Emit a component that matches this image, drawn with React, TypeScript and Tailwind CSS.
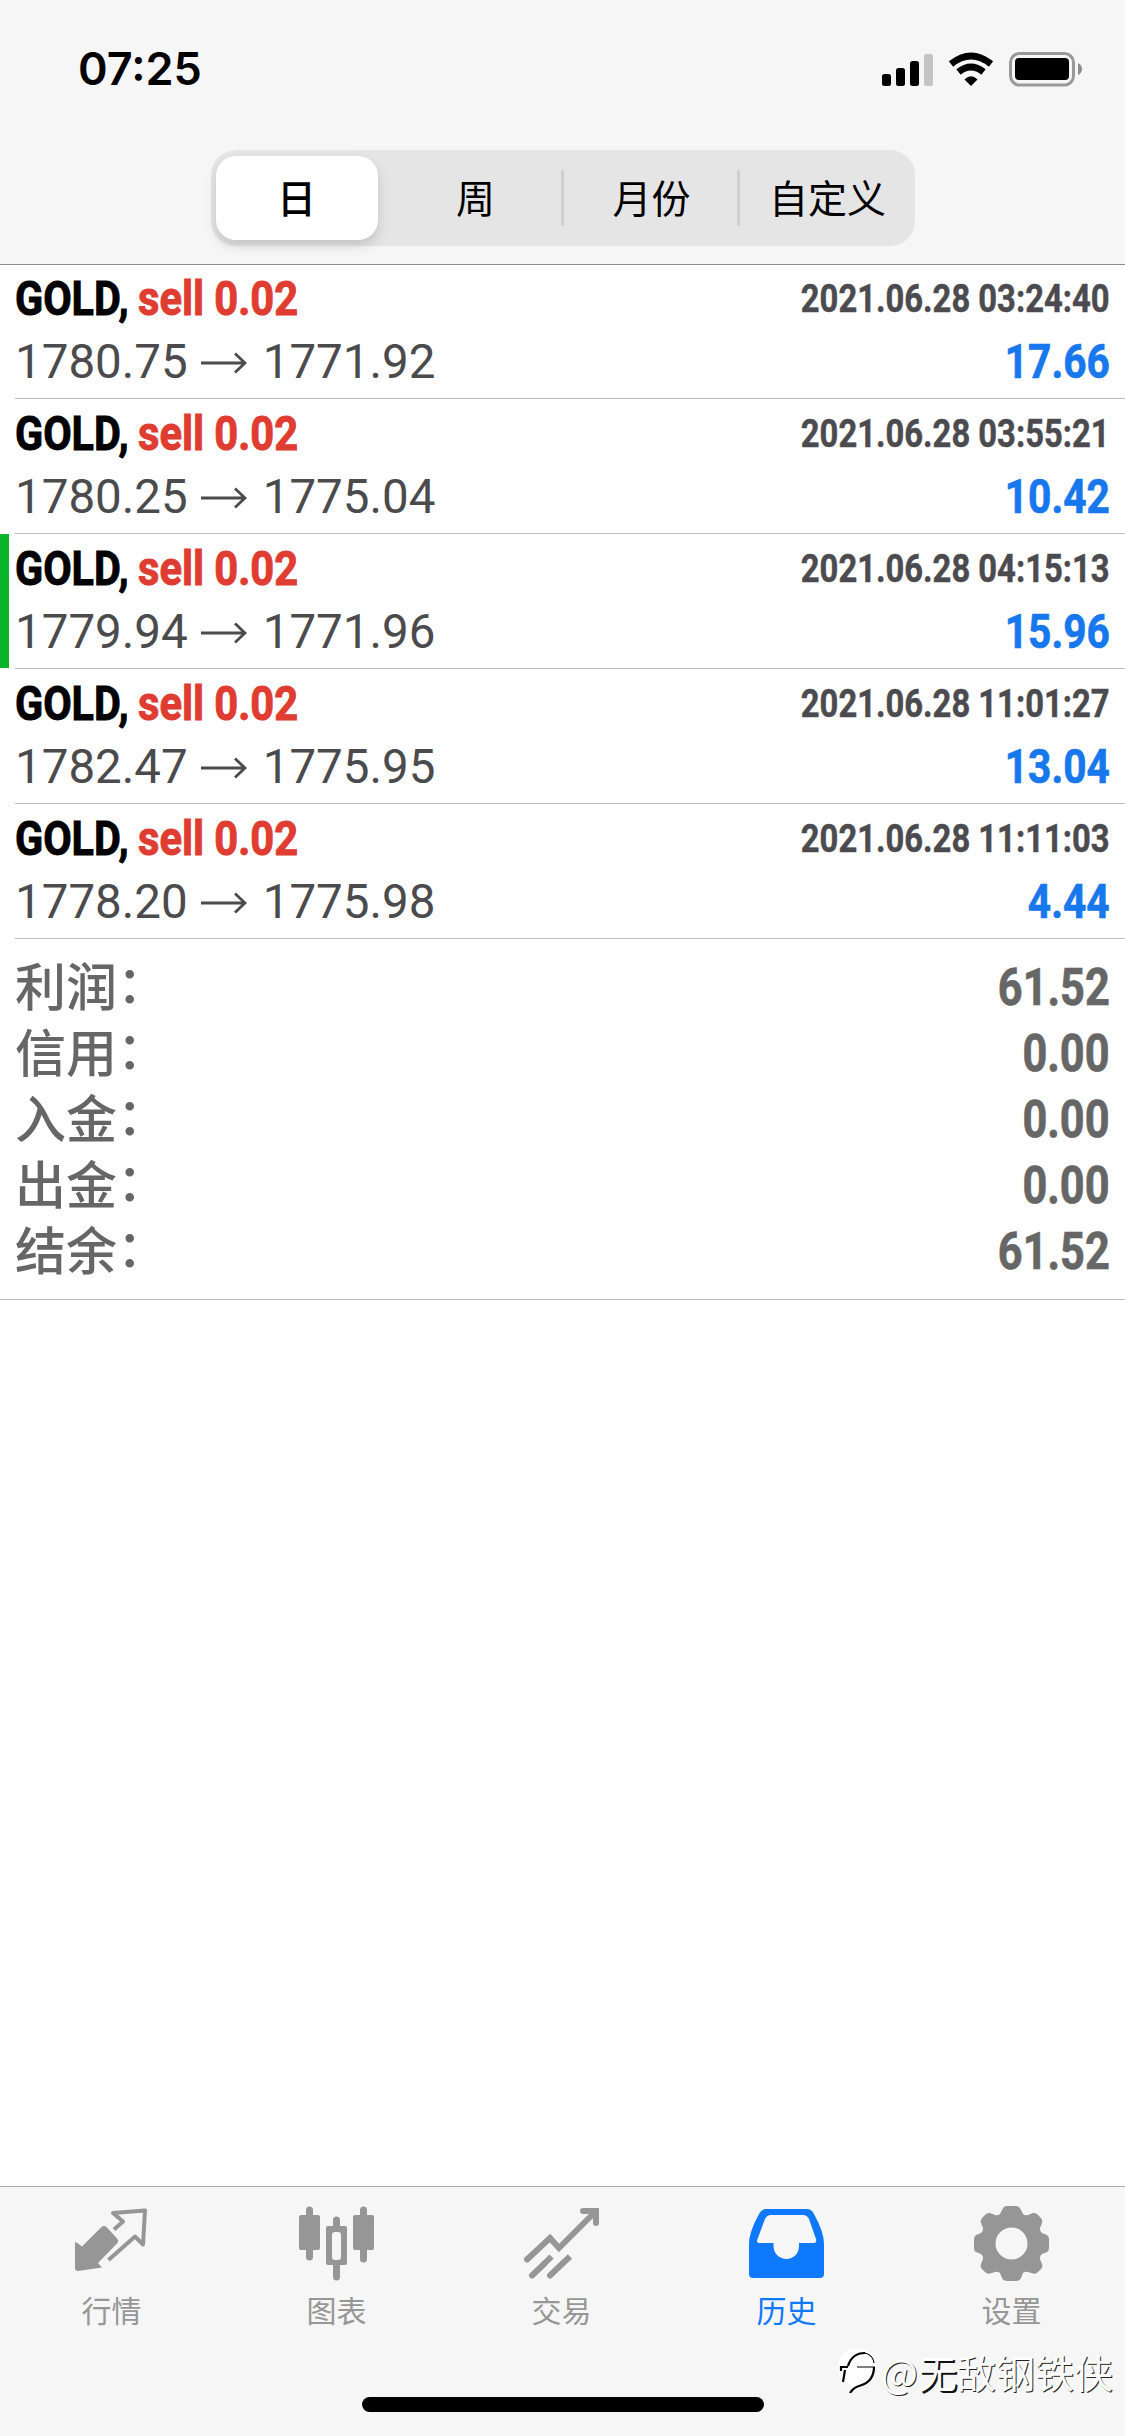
import type { ReactNode } from 'react'

const periods = ['日', '周', '月份', '自定义']

const deals = [
    { open: '1780.75', close: '1771.92', time: '2021.06.28 03:24:40', profit: '17.66' },
    { open: '1780.25', close: '1775.04', time: '2021.06.28 03:55:21', profit: '10.42' },
    { open: '1779.94', close: '1771.96', time: '2021.06.28 04:15:13', profit: '15.96', marked: true },
    { open: '1782.47', close: '1775.95', time: '2021.06.28 11:01:27', profit: '13.04' },
    { open: '1778.20', close: '1775.98', time: '2021.06.28 11:11:03', profit: '4.44' }
]

const totals = [
    { label: '利润', value: '61.52' },
    { label: '信用', value: '0.00' },
    { label: '入金', value: '0.00' },
    { label: '出金', value: '0.00' },
    { label: '结余', value: '61.52' }
]

const tabs: { label: string; icon: ReactNode; active?: boolean }[] = [
    {
        label: '行情',
        icon: (
            <g transform="translate(1 1)">
                <path d="M1.500 34.500Q0 33 0 36V60Q0 63 3 63L27 59.500L23 55L42.500 35Q44 33 42.500 31L31.500 19Q29 17 26.500 19L7 38.500Z" fill="currentColor" />
                <path d="M39 21.500L48 13.500L38 5L70 2.500L68 36.500L60 28.500L33.500 52" fill="none" stroke="currentColor" strokeWidth="4" strokeLinejoin="round" />
            </g>
        )
    },
    {
        label: '图表',
        icon: (
            <>
                <path d="M10.500 3V50M64.500 3V52M37.500 13V22M37.500 58V70" stroke="currentColor" strokeWidth="7" strokeLinecap="round" />
                <rect x="0" y="8" width="21" height="35" rx="2" fill="currentColor" />
                <rect x="54" y="8" width="21" height="35" rx="2" fill="currentColor" />
                <rect x="27" y="19" width="21" height="39" rx="2" fill="currentColor" />
                <rect x="33" y="25" width="9" height="28" rx="3" fill="#f6f6f6" />
            </>
        )
    },
    {
        label: '交易',
        icon: (
            <g fill="none" stroke="currentColor" strokeWidth="6" strokeLinecap="round">
                <path d="M3 52.500L26 31L35 41L70 6" />
                <path d="M59 4H72V16" />
                <path d="M8 68.500L20 57M26 68.500L38 57" />
                <path d="M20 57L27.500 49.500M38 57L46 49.500" strokeLinecap="butt" />
            </g>
        )
    },
    {
        label: '历史',
        active: true,
        icon: (
            <path
                fillRule="evenodd"
                fill="currentColor"
                d="M17 2H58Q62.500 2 65 7Q75 25 75 37V67Q75 71 71 71H4Q0 71 0 67V37Q0 25 10 7Q12.500 2 17 2ZM22 8H54Q58 8 60 12L67 32Q68 36 65 36H50V39C50 47 44 52 37.500 52S24.500 47 24.500 39V36H10Q7 36 8.500 32L16 12Q18 8 22 8Z"
            />
        )
    },
    {
        label: '设置',
        icon: (
            <path
                fillRule="evenodd"
                fill="currentColor"
                d="M33 -1H42Q45 -1 46.500 2L49 7Q51 9 54 8L59 6Q62 5.500 64 8L67 11Q69 13.500 68 16L66 21Q65.500 24 68 26L73 28Q75 29.500 75 32V41Q75 44 73 45L68 47Q65.500 49 66 52L68 57Q69 60 67 62L64 65Q62 67.500 59 66.500L54 65Q51 64 49 66L46.500 72Q45 74 42 74H33Q30 74 28.500 72L26 66Q24 64 21 65L16 66.500Q13 67.500 11 65L8 62Q6 60 7 57L9 52Q9.500 49 7 47L2 45Q0 44 0 41V32Q0 29.500 2 28L7 26Q9.500 24 9 21L7 16Q6 13.500 8 11L11 8Q13 5.500 16 6L21 8Q24 9 26 7L28.500 2Q30 -1 33 -1ZM37.500 20.500A16 16 0 1 0 37.500 52.500A16 16 0 1 0 37.500 20.500Z"
            />
        )
    }
]

function StatusBar() {
    return (
        <div className="flex h-[150px] items-start justify-between pl-[78px] pr-[42px] pt-[42px]">
            <span className="font-['Inter'] text-[45px] font-semibold leading-[54px]">07:25</span>
            <svg viewBox="0 0 201 36" className="mt-[9px] h-[36px] w-[201px]">
                <rect x="0" y="23" width="9" height="12" rx="2.500" />
                <rect x="14" y="17" width="9" height="18" rx="2.500" />
                <rect x="28" y="10" width="9" height="25" rx="2.500" />
                <rect x="42" y="3" width="9" height="32" rx="2.500" fill="#c4c4c4" />
                <g fill="none" stroke="#000" strokeWidth="7">
                    <path d="M69 13Q89 -3 109 13" />
                    <path d="M76.500 21Q89 11 101.500 21" />
                </g>
                <path d="M89 35L82.500 28.500Q89 22 95.500 28.500Z" />
                <rect x="128.500" y="2.500" width="63" height="31.500" rx="9" fill="none" stroke="#999" strokeWidth="3" />
                <rect x="133" y="7" width="54" height="22" rx="4" />
                <path d="M196 12Q200 14 200 18T196 24Z" fill="#8c8c8c" />
            </svg>
        </div>
    )
}

function PeriodSwitch() {
    return (
        <div className="mx-auto flex h-24 w-[704px] items-center rounded-[25px] bg-[#e5e5e6] text-[39px] leading-none">
            {periods.map((period, i) => (
                <div key={period} className="flex h-full w-44 items-center">
                    {i > 1 && <span className="-ml-[2px] -mr-px h-[56px] w-[3px] rounded-full bg-[#cfcfd1]" />}
                    {i === 0 ? (
                        <span className="ml-[5px] flex h-[84px] w-[162px] items-center justify-center rounded-[20px] bg-white pb-1 font-medium shadow-[0_6px_12px_rgba(0,0,0,0.14)]">{period}</span>
                    ) : (
                        <span className="flex-1 pb-1 pl-0.5 text-center">{period}</span>
                    )}
                </div>
            ))}
        </div>
    )
}

function Arrow() {
    return (
        <svg viewBox="0 0 46 22" className="ml-[13px] mr-[16px] h-[22px] w-[46px]" fill="none" stroke="currentColor" strokeWidth="2.800">
            <path d="M0 11H44M34 1.500L44 11L34 20.500" />
        </svg>
    )
}

export default function App() {
    return (
        <div className="flex h-[2436px] w-[1125px] flex-col overflow-hidden bg-white font-['Noto_Sans_CJK_SC',sans-serif] text-black">
            <header className="h-[265px] shrink-0 border-b border-[#8c8c8c] bg-[#f6f6f6]">
                <StatusBar />
                <PeriodSwitch />
            </header>

            <ul className="-mt-px font-['Roboto',sans-serif]">
                {deals.map(deal => (
                    <li key={deal.time} className="relative h-[135px] pl-[15px]">
                        {deal.marked && <span className="absolute left-0 top-0 h-[134px] w-[9px] bg-[#09b52b]" />}
                        <div className="flex h-full flex-col border-b border-[#bcbcbe] pr-[15px]">
                            <div className="flex h-[66px] items-center justify-between pt-[4px] font-bold">
                                <div className="flex text-[48px] leading-none [-webkit-text-stroke:1px_currentColor]">
                                    <span className="w-[123px] origin-left scale-x-[0.860]">GOLD,</span>
                                    <span className="origin-left scale-x-[0.868] whitespace-nowrap text-[#df3c32]">sell 0.02</span>
                                </div>
                                <span className="origin-right scale-x-[0.840] whitespace-nowrap text-[39px] leading-none text-[#4b4b4f] [-webkit-text-stroke:0.5px_currentColor]">{deal.time}</span>
                            </div>
                            <div className="flex h-[66px] items-center justify-between text-[47.500px] leading-none">
                                <div className="flex items-center text-[#4b4b4d]">
                                    {deal.open}
                                    <Arrow />
                                    {deal.close}
                                </div>
                                <span className="origin-right scale-x-[0.855] font-bold text-[#1777ec] [-webkit-text-stroke:0.7px_currentColor]">{deal.profit}</span>
                            </div>
                        </div>
                    </li>
                ))}
            </ul>

            <dl className="h-[361px] border-b border-[#bcbcbe] pl-[15px] pr-[15px] pt-[14px] text-[51px] leading-none text-[#666]">
                {totals.map(total => (
                    <div key={total.label} className="flex h-[66px] items-center justify-between">
                        <dt className="flex pb-[3px] font-medium">
                            {total.label}
                            <span className="-mt-[3px]">：</span>
                        </dt>
                        <dd className="origin-right scale-x-[0.850] pt-[2px] font-['Roboto',sans-serif] font-bold [-webkit-text-stroke:0.7px_currentColor]">{total.value}</dd>
                    </div>
                ))}
            </dl>

            <nav className="relative mt-auto h-[250px] border-t border-[#adadad] bg-[#f6f6f6]">
                <div className="grid grid-cols-5">
                    {tabs.map(tab => (
                        <div key={tab.label} className={tab.active ? 'flex flex-col items-center pt-5 text-[#0e79fd]' : 'flex flex-col items-center pt-5 text-[#969696]'}>
                            <svg viewBox="0 0 75 75" className="-ml-0.5 h-[75px] w-[75px] overflow-visible">{tab.icon}</svg>
                            <span className="-ml-0.5 mt-[5px] text-[30px] leading-[44px]">{tab.label}</span>
                        </div>
                    ))}
                </div>
                <div className="absolute bottom-[24px] left-[362px] h-[15px] w-[402px] rounded-full bg-black" />
                <div className="absolute bottom-[35px] right-[12px] flex items-center text-[39px] leading-[60px] text-white [text-shadow:1px_1px_0_#222]">
                    <svg viewBox="0 0 42 44" className="mr-[2px] h-[44px] w-[42px]">
                        <circle cx="20" cy="18" r="19" fill="#fff" />
                        <g fill="none" stroke="#000">
                            <path d="M11 17Q15 4 28 4M8 21L6 33M4 22V18H11M37 18Q37 33 22 37Q17 38 13 44" strokeWidth="2.200" />
                            <path d="M20 18H38M28 4Q36 6 37 14" strokeWidth="1.200" />
                        </g>
                    </svg>
                    <span>
                        @<span className="[text-shadow:2px_2px_0_#111]">无</span>敌钢铁侠
                    </span>
                </div>
            </nav>
        </div>
    )
}
